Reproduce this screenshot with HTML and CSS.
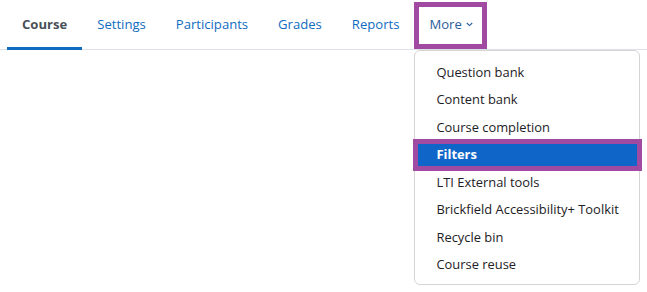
FILE: index.html
```html
<!DOCTYPE html>
<html lang="en">
<head>
    <meta charset="UTF-8">
    <title>Course</title>
    <link rel="stylesheet" href="styles.css">
</head>
<body>
    <div class="page">
        <nav class="secondary-nav">
            <a class="nav-link active" href="#">Course</a>
            <a class="nav-link" href="#">Settings</a>
            <a class="nav-link" href="#">Participants</a>
            <a class="nav-link" href="#">Grades</a>
            <a class="nav-link" href="#">Reports</a>
            <div class="more">
                <a class="nav-link more-toggle marked" href="#">More
                    <svg class="caret" width="7" height="5" viewBox="0 0 7 5"><path d="M0.8 1 L3.5 3.6 L6.2 1" fill="none" stroke="currentColor" stroke-width="1.1"/></svg>
                </a>
                <div class="dropdown-menu">
                    <a class="dropdown-item" href="#">Question bank</a>
                    <a class="dropdown-item" href="#">Content bank</a>
                    <a class="dropdown-item" href="#">Course completion</a>
                    <a class="dropdown-item selected marked" href="#">Filters</a>
                    <a class="dropdown-item" href="#">LTI External tools</a>
                    <a class="dropdown-item" href="#">Brickfield Accessibility+ Toolkit</a>
                    <a class="dropdown-item" href="#">Recycle bin</a>
                    <a class="dropdown-item" href="#">Course reuse</a>
                </div>
            </div>
        </nav>
    </div>
</body>
</html>
```
FILE: styles.css
```css
body {
    margin: 0;
    font-family: "Open Sans", "Noto Sans", sans-serif;
    font-size: 13.1px;
    color: #1d2125;
    background: #fff;
}
.page {
    width: 647px;
    height: 292px;
}
.secondary-nav {
    display: flex;
    height: 49px;
    padding-left: 7px;
    border-bottom: 1px solid #dee2e6;
}
.nav-link {
    display: flex;
    align-items: center;
    height: 47px;
    padding: 0 15px;
    border-bottom: 3px solid transparent;
    margin-bottom: -1px;
    color: #0f6cbf;
    text-decoration: none;
}
.nav-link.active {
    color: #495057;
    font-weight: 700;
    border-bottom-color: #0f6cbf;
}
.more {
    position: relative;
}
.more-toggle {
    position: relative;
    gap: 4px;
    color: #2a5d9a;
}
.caret {
    margin-top: 1px;
}
.marked::after {
    content: "";
    position: absolute;
    border: 5px solid #a14aa2;
    pointer-events: none;
}
.more-toggle.marked::after {
    top: 2px;
    left: 0;
    right: 1px;
    bottom: -2px;
}
.dropdown-menu {
    position: absolute;
    top: 50px;
    left: 0;
    width: 224px;
    padding: 8px 0 6px;
    border: 1px solid #d5d5d5;
    border-radius: 6px;
    background: #fff;
}
.dropdown-item {
    position: relative;
    display: block;
    height: 27.43px;
    line-height: 27px;
    padding: 0 21px;
    font-size: 12.9px;
    color: #1d2125;
    text-decoration: none;
    white-space: nowrap;
}
.dropdown-item.selected {
    background: #0f66c8;
    color: #fff;
    font-weight: 700;
}
.dropdown-item.marked::after {
    top: -2px;
    left: -2px;
    right: -3px;
    bottom: -2px;
}
```
